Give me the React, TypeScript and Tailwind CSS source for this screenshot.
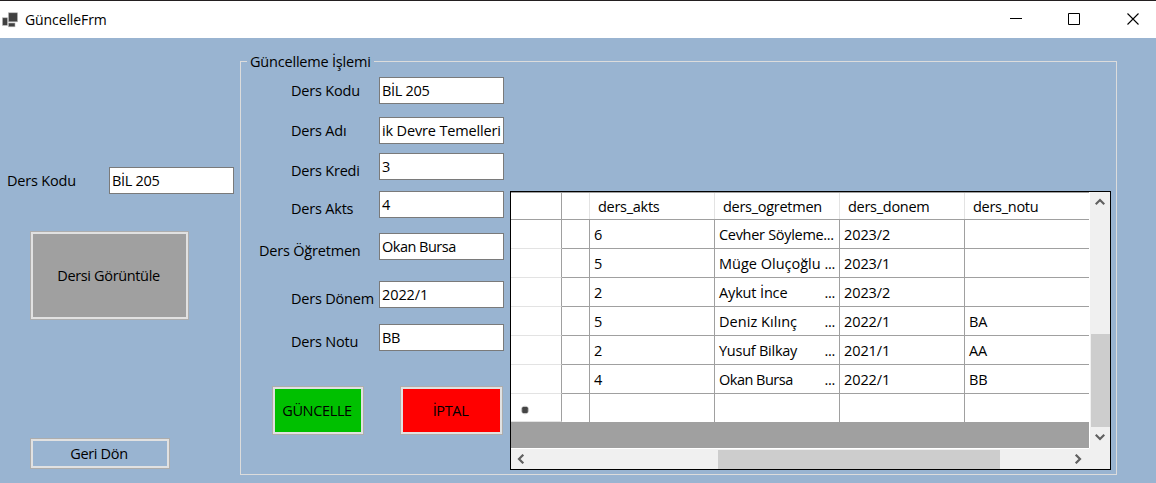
import React from "react";

const fields = [
  { label: "Ders Kodu", value: "BİL 205", row: "h-[40px]", pad: "pl-[50px]", shift: "pt-0", track: "tracking-[-0.3px]" },
  { label: "Ders Adı", value: "ik Devre Temelleri", row: "h-[36px]", pad: "pl-[50px]", shift: "pt-0", track: "tracking-[-0.15px]" },
  { label: "Ders Kredi", value: "3", row: "h-[38px]", pad: "pl-[50px]", shift: "pt-[8px]", track: "tracking-[-0.3px]" },
  { label: "Ders Akts", value: "4", row: "h-[42px]", pad: "pl-[50px]", shift: "pt-[8px]", track: "tracking-[-0.3px]" },
  { label: "Ders Öğretmen", value: "Okan Bursa", row: "h-[48px]", pad: "pl-[18px]", shift: "pt-[8px]", track: "tracking-[-0.5px]" },
  { label: "Ders Dönem", value: "2022/1", row: "h-[43px]", pad: "pl-[50px]", shift: "pt-[8px]", track: "tracking-[-0.1px]" },
  { label: "Ders Notu", value: "BB", row: "h-[27px]", pad: "pl-[50px]", shift: "pt-[8px]", track: "tracking-[-0.3px]" },
];

const rows = [
  { akts: "6", name: "Cevher Söyleme...", more: "", donem: "2023/2", notu: "", track: "tracking-[-0.3px]" },
  { akts: "5", name: "Müge Oluçoğlu", more: "...", donem: "2023/1", notu: "", track: "tracking-[0px]" },
  { akts: "2", name: "Aykut İnce", more: "...", donem: "2023/2", notu: "", track: "tracking-[-0.15px]" },
  { akts: "5", name: "Deniz Kılınç", more: "...", donem: "2022/1", notu: "BA", track: "tracking-[0.05px]" },
  { akts: "2", name: "Yusuf Bilkay", more: "...", donem: "2021/1", notu: "AA", track: "tracking-[-0.25px]" },
  { akts: "4", name: "Okan Bursa", more: "...", donem: "2022/1", notu: "BB", track: "tracking-[-0.5px]" },
];

function TextBox({ value, track }: { value: string; track: string }) {
  return (
    <div
      className={
        "flex h-[27px] w-[125px] shrink-0 items-center overflow-hidden border border-[#7a7a7a] bg-white pl-[2px] whitespace-nowrap " +
        track
      }
    >
      {value}
    </div>
  );
}

function Button({ children, className }: { children: React.ReactNode; className: string }) {
  return (
    <button className={"border border-[#adadad] tracking-[-0.35px] " + className}>
      <span className="flex h-full w-full items-center justify-center border-2 border-[#e1e1e1] pr-[2px]">{children}</span>
    </button>
  );
}

function Chevron({ d, className }: { d: string; className: string }) {
  return (
    <svg viewBox="0 0 10 10" className={"h-[10px] w-[10px] " + className} fill="none" stroke="#606060" strokeWidth="2.2">
      <path d={d} />
    </svg>
  );
}

function GridRow({ row }: { row: (typeof rows)[number] }) {
  return (
    <div className="flex h-[29px] items-stretch bg-white tracking-[-0.1px]">
      <div className="w-[51px] border-r border-b border-r-[#a0a0a0] border-b-[#e3e3e3]" />
      <div className="w-[28px] border-r border-b border-[#a0a0a0]" />
      <div className="flex w-[125px] items-center border-r border-b border-[#a0a0a0] pt-[2px] pl-[4px]">{row.akts}</div>
      <div className="flex w-[125px] items-center justify-between border-r border-b border-[#a0a0a0] pt-[2px] pr-[4px] pl-[4px] whitespace-nowrap">
        <span className={row.track}>{row.name}</span>
        <span className="tracking-[-0.3px]">{row.more}</span>
      </div>
      <div className="flex w-[125px] items-center border-r border-b border-[#a0a0a0] pt-[2px] pl-[4px]">{row.donem}</div>
      <div className="flex w-[124px] items-center border-b border-[#a0a0a0] pt-[2px] pl-[4px]">{row.notu}</div>
    </div>
  );
}

function DataGrid() {
  return (
    <div className="flex h-[279px] w-[601px] flex-col border border-black bg-[#f0f0f0]">
      <div className="flex h-[256px]">
        <div className="w-[578px] border-t border-[#a0a0a0] bg-[#a0a0a0]">
          <div className="flex h-[27px] border-b border-[#a0a0a0] bg-white tracking-[-0.28px]">
            <div className="w-[51px] border-r border-[#a0a0a0]" />
            <div className="w-[28px] border-r border-[#e3e3e3]" />
            <div className="flex w-[125px] items-center border-r border-[#e3e3e3] pt-[2px] pl-[8px]">ders_akts</div>
            <div className="flex w-[125px] items-center border-r border-[#e3e3e3] pt-[2px] pl-[8px]">ders_ogretmen</div>
            <div className="flex w-[125px] items-center border-r border-[#e3e3e3] pt-[2px] pl-[8px]">ders_donem</div>
            <div className="flex items-center pt-[2px] pl-[8px]">ders_notu</div>
          </div>
          {rows.map((row, i) => (
            <GridRow key={i} row={row} />
          ))}
          <div className="flex h-[28px] bg-white">
            <div className="flex w-[51px] items-center border-r border-b border-r-[#a0a0a0] border-b-[#e3e3e3] pl-[9px]">
              <svg viewBox="0 0 10 10" className="mt-[4px] h-[10px] w-[10px]">
                <circle cx="5" cy="5" r="4.2" fill="#c4c4c4" />
                <rect x="2.2" y="2" width="5.6" height="6" rx="1.2" fill="#444" />
              </svg>
            </div>
            <div className="w-[28px] border-r border-[#a0a0a0]" />
            <div className="w-[125px] border-r border-[#a0a0a0]" />
            <div className="w-[125px] border-r border-[#a0a0a0]" />
            <div className="w-[125px] border-r border-[#a0a0a0]" />
          </div>
        </div>
        <div className="flex w-[21px] flex-col items-center border-l border-white">
          <Chevron d="M0.7 7.3L5 3L9.3 7.3" className="mt-[5px] mr-px" />
          <div className="mt-[127px] h-[93px] w-[19px] bg-[#cdcdcd]" />
          <Chevron d="M0.7 2.7L5 7L9.3 2.7" className="mt-[5px] mr-px" />
        </div>
      </div>
      <div className="flex h-[21px] w-[578px] items-center border-t border-white">
        <Chevron d="M7.3 0.7L3 5L7.3 9.3" className="ml-[5px]" />
        <div className="ml-[192px] h-[19px] w-[282px] bg-[#cdcdcd]" />
        <Chevron d="M2.7 0.7L7 5L2.7 9.3" className="ml-[73px]" />
      </div>
    </div>
  );
}

function TitleBar() {
  return (
    <header className="flex h-[38px] items-center border-t border-[#231f20] bg-white">
      <svg viewBox="0 0 16 16" className="ml-[2px] h-[16px] w-[16px]">
        <g fill="#404040" stroke="#b5b5b5" strokeWidth="0.6">
          <rect x="6.5" y="0.8" width="9" height="9" />
          <rect x="0.5" y="5.8" width="5" height="7.5" />
          <rect x="6.5" y="11" width="6.5" height="3.8" />
        </g>
      </svg>
      <span className="ml-[7px] text-[14px] tracking-[-0.1px]">GüncelleFrm</span>
      <svg viewBox="0 0 130 13" className="ml-auto mr-[16px] h-[13px] w-[130px]" fill="none" stroke="#000" strokeWidth="1">
        <path d="M0 5.5H12" />
        <path d="M58.5 0.5H69.5V11.5H58.5Z" />
        <path d="M117.5 0.5L128.5 11.5M128.5 0.5L117.5 11.5" strokeWidth="1.1" />
      </svg>
    </header>
  );
}

export default function App() {
  return (
    <div className="h-[483px] w-[1156px] overflow-hidden bg-[#99b4d1] font-['Open_Sans','Noto_Sans',sans-serif] text-[14.5px] leading-[20px] tracking-[-0.2px] text-black">
      <TitleBar />
      <main className="flex h-[445px]">
        <aside className="w-[240px] shrink-0 pt-[129px]">
          <div className="flex items-center pl-[7px]">
            <span className="w-[102px]">Ders Kodu</span>
            <TextBox value="BİL 205" track="tracking-[-0.3px]" />
          </div>
          <Button className="mt-[37px] ml-[30px] block h-[89px] w-[159px] bg-[#a0a0a0]">Dersi Görüntüle</Button>
          <Button className="mt-[118px] ml-[30px] block h-[31px] w-[140px]">Geri Dön</Button>
        </aside>
        <fieldset className="mt-[13px] h-[424px] w-[877px] shrink-0 border border-[#dcdcdc]">
          <legend className="ml-[6px] h-[21px] w-[127px] pt-px pl-[3px] whitespace-nowrap">Güncelleme İşlemi</legend>
          <div className="flex">
            <div className="w-[269px] shrink-0 pt-[5px]">
              {fields.map((f) => (
                <div key={f.label} className={"flex items-start " + f.row}>
                  <div className={"flex h-[27px] w-[138px] items-center whitespace-nowrap " + f.pad}>
                    <span className={f.shift}>{f.label}</span>
                  </div>
                  <TextBox value={f.value} track={f.track} />
                </div>
              ))}
              <div className="mt-[35px] flex gap-[36px] pl-[31px]">
                <Button className="h-[49px] w-[92px] bg-[#00c000]">GÜNCELLE</Button>
                <Button className="h-[49px] w-[103px] bg-[#ff0000]">İPTAL</Button>
              </div>
            </div>
            <div className="pt-[119px]">
              <DataGrid />
            </div>
          </div>
        </fieldset>
      </main>
    </div>
  );
}
